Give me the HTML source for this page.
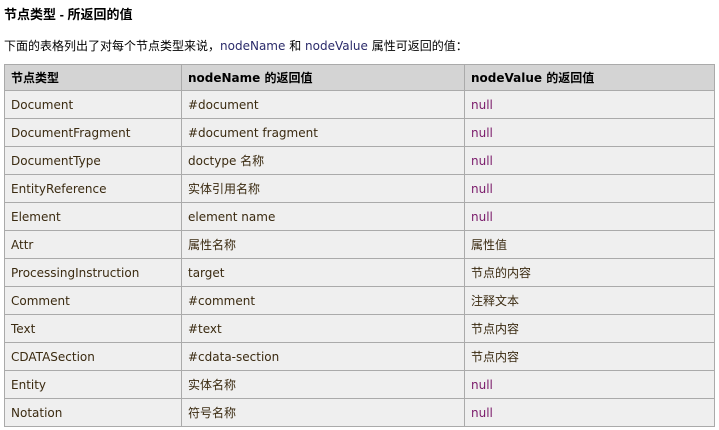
<!DOCTYPE html>
<html><head><meta charset="utf-8"><style>
body{margin:0;background:#fff;font-family:"DejaVu Sans","Noto Sans CJK SC",sans-serif;font-size:12px;color:#000;width:719px;height:430px;overflow:hidden}
h3{position:absolute;left:4px;top:4px;margin:0;font-size:13px;font-weight:bold;font-family:"Liberation Sans","Noto Sans CJK SC",sans-serif}
p{position:absolute;left:4px;top:37px;margin:0;font-size:12px}
p span{color:#2a2a6a}
table{position:absolute;left:4px;top:64px;border-collapse:collapse;width:710px;table-layout:fixed}
td,th{border:1px solid #aaa;padding:0 6px;height:27px;text-align:left;vertical-align:middle;color:#3a2a10;background:#efefef}
th{background:#d4d4d4;color:#000;font-weight:bold;height:25px}
td.n{color:#7a1a6a}
</style></head><body>
<h3>节点类型 - 所返回的值</h3>
<p>下面的表格列出了对每个节点类型来说，<span>nodeName</span> 和 <span>nodeValue</span> 属性可返回的值：</p>
<table>
<col style="width:177px"><col style="width:283px"><col style="width:250px">
<tr><th>节点类型</th><th>nodeName 的返回值</th><th>nodeValue 的返回值</th></tr>
<tr><td>Document</td><td>#document</td><td class="n">null</td></tr>
<tr><td>DocumentFragment</td><td>#document fragment</td><td class="n">null</td></tr>
<tr><td>DocumentType</td><td>doctype 名称</td><td class="n">null</td></tr>
<tr><td>EntityReference</td><td>实体引用名称</td><td class="n">null</td></tr>
<tr><td>Element</td><td>element name</td><td class="n">null</td></tr>
<tr><td>Attr</td><td>属性名称</td><td>属性值</td></tr>
<tr><td>ProcessingInstruction</td><td>target</td><td>节点的内容</td></tr>
<tr><td>Comment</td><td>#comment</td><td>注释文本</td></tr>
<tr><td>Text</td><td>#text</td><td>节点内容</td></tr>
<tr><td>CDATASection</td><td>#cdata-section</td><td>节点内容</td></tr>
<tr><td>Entity</td><td>实体名称</td><td class="n">null</td></tr>
<tr><td>Notation</td><td>符号名称</td><td class="n">null</td></tr>
</table>
</body></html>
